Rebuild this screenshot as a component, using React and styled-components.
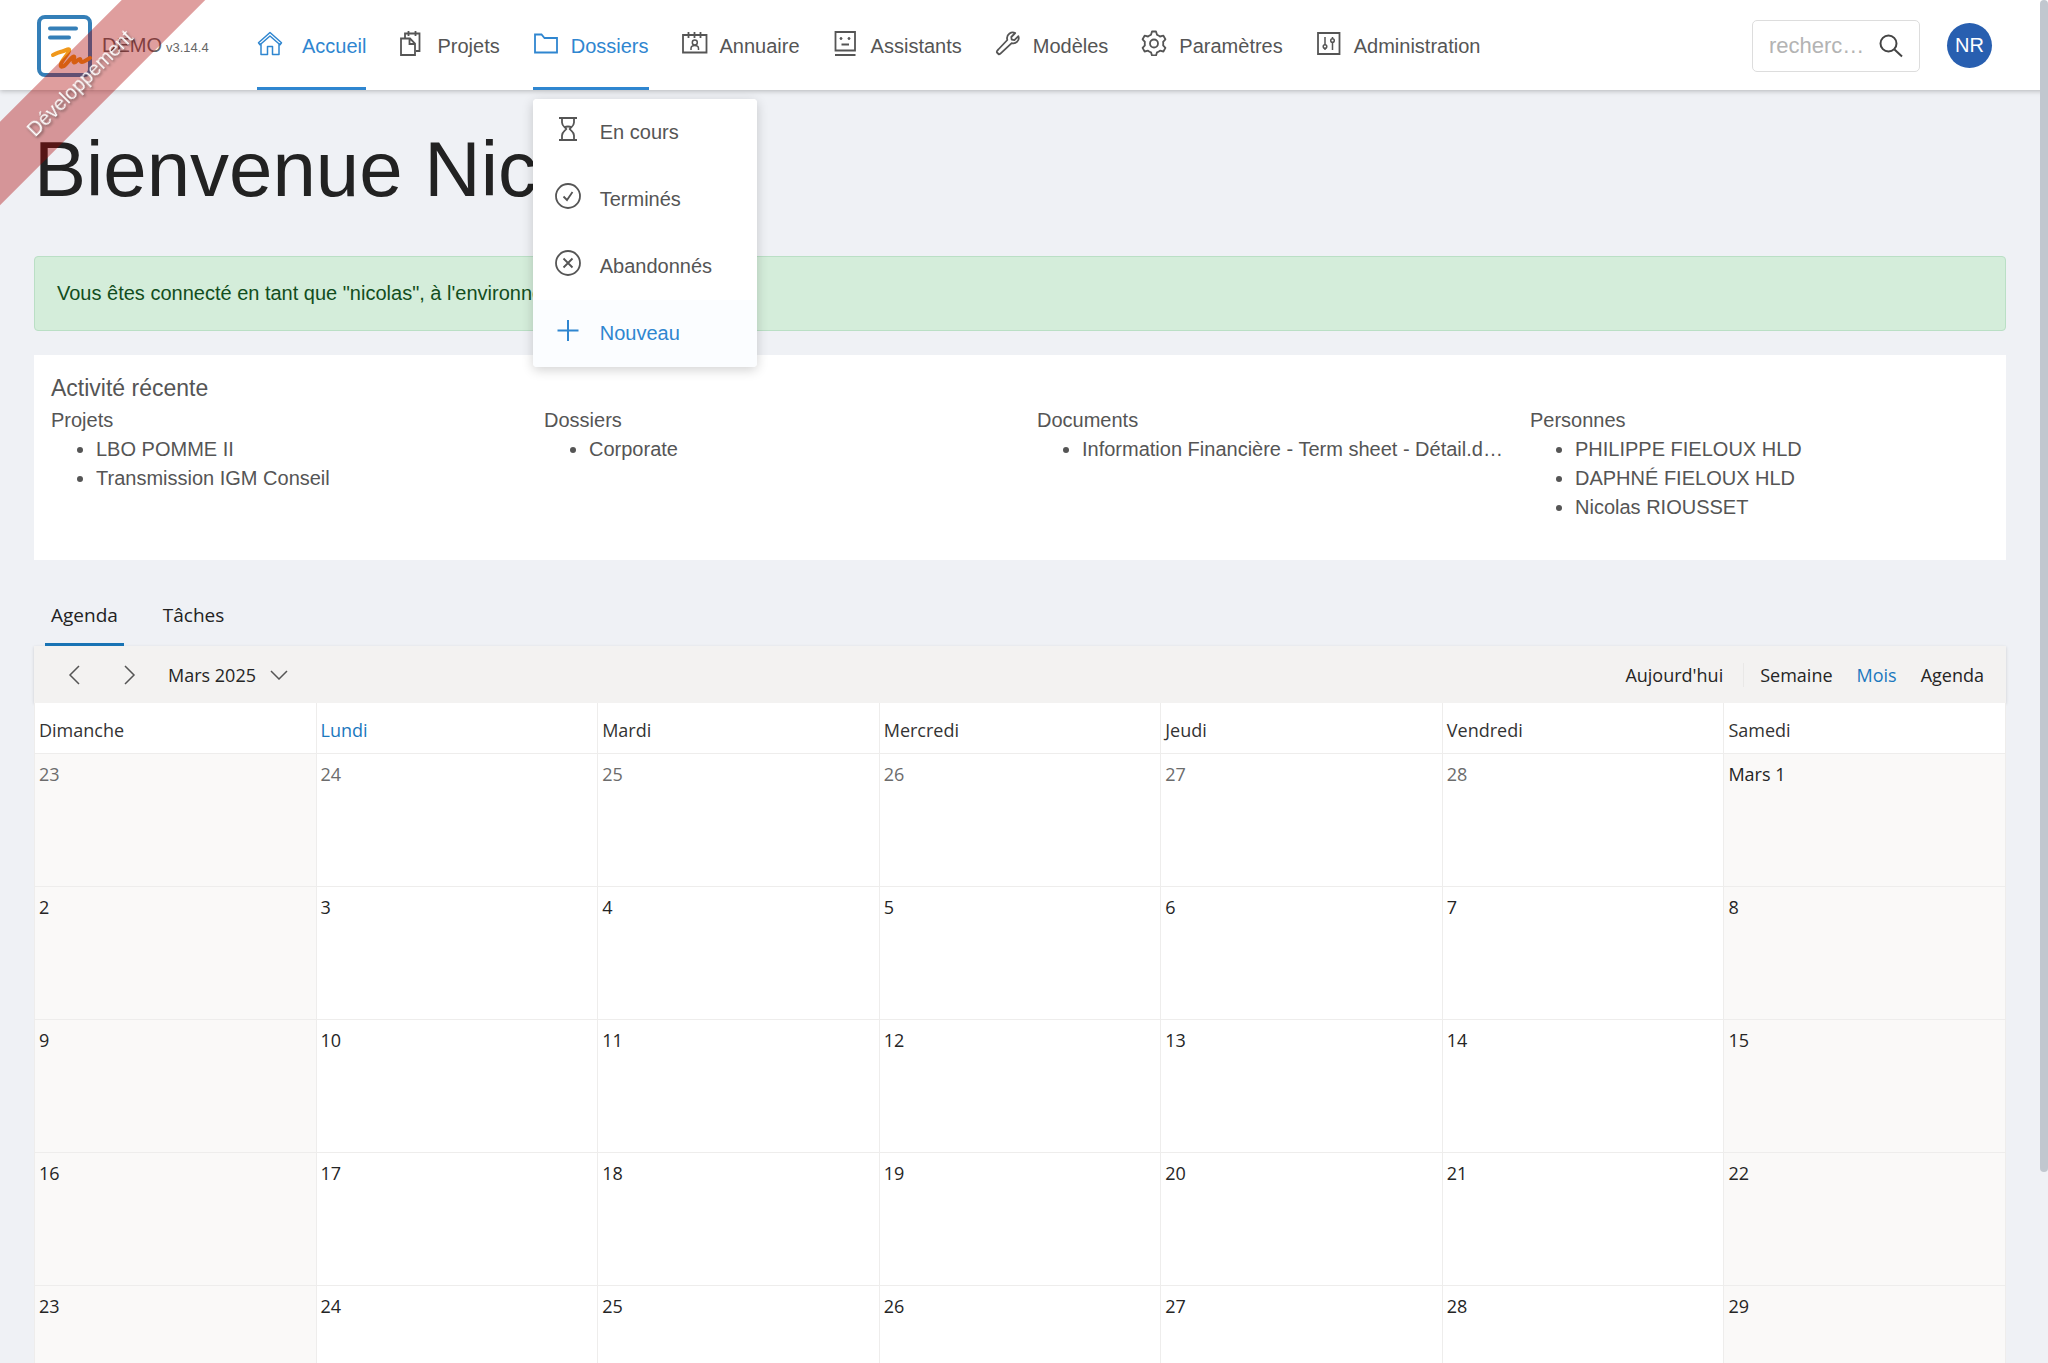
import React from 'react';
import styled, { createGlobalStyle } from 'styled-components';

const GlobalStyle = createGlobalStyle`
  * {
    box-sizing: border-box;
  }

  body {
    margin: 0;
    background-color: #eff1f5;
    color: #555;
    font-family: "Liberation Sans", Arial, sans-serif;
    font-size: 20px;
  }

  #root {
    height: 100vh;
    overflow: hidden;
  }
`;

const Page = styled.div`
  padding-right: 8px;
`;

const Ribbon = styled.div`
  position: fixed;
  top: 54px;
  left: -70px;
  width: 300px;
  height: 59px;
  line-height: 59px;
  text-align: center;
  color: white;
  background-color: rgba(170, 0, 0, 0.38);
  text-shadow: 0 2px 3px rgba(0, 0, 0, 0.5);
  transform: rotate(-45deg);
  pointer-events: none;
  z-index: 20;
`;

const ScrollThumb = styled.div`
  position: fixed;
  top: 0;
  right: 0;
  width: 8px;
  height: 86vh;
  border-radius: 4px;
  background-color: #c1c7cf;
  z-index: 30;
`;

const Header = styled.header`
  display: flex;
  align-items: center;
  height: 90px;
  margin-right: -8px;
  padding: 1px 56px 0 36px;
  background-color: white;
  box-shadow: 0 1px 5px rgba(0, 0, 0, 0.25);
`;

const Brand = styled.a`
  display: flex;
  align-items: center;
  width: 221px;
  color: #666;
  text-decoration: none;
`;

const BrandName = styled.span`
  margin-left: 9px;
`;

const Version = styled.span`
  margin-left: 4px;
  padding-top: 4px;
  font-size: 13px;
`;

const NavLinks = styled.nav`
  display: flex;
  align-self: stretch;
  gap: 33px;
  flex: 1;
`;

const NavItem = styled.div`
  position: relative;
  display: flex;
`;

const NavLink = styled.a`
  display: flex;
  align-items: center;
  gap: 12px;
  padding-top: 4px;
  border-bottom: 3px solid ${props => (props.$active ? '#2f86d0' : 'transparent')};
  color: ${props => (props.$active ? '#2f86d0' : '#555')};
  text-decoration: none;

  svg {
    margin-bottom: 6px;
  }
`;

const Menu = styled.div`
  position: absolute;
  top: 98px;
  left: 0;
  width: 224px;
  overflow: hidden;
  background-color: white;
  border-radius: 4px;
  box-shadow: 0 3px 12px rgba(0, 0, 0, 0.18);
  z-index: 10;
`;

const MenuItem = styled.a`
  display: flex;
  align-items: center;
  gap: 19px;
  height: 67px;
  padding-left: 22px;
  color: ${props => (props.$active ? '#2f86d0' : '#555')};
  background-color: ${props => (props.$active ? '#fbfdff' : 'white')};
  text-decoration: none;

  svg {
    margin-bottom: 7px;
  }
`;

const Search = styled.label`
  display: flex;
  align-items: center;
  width: 168px;
  height: 52px;
  margin-right: 27px;
  padding: 0 16px;
  border: 1px solid #ddd;
  border-radius: 5px;
  color: #444;
`;

const SearchInput = styled.input`
  flex: 1;
  min-width: 0;
  padding: 0;
  border: none;
  outline: none;
  background: none;
  font-family: inherit;
  font-size: 22px;

  &::placeholder {
    color: #b3b3b3;
  }
`;

const Avatar = styled.button`
  width: 45px;
  height: 45px;
  padding: 0;
  border: none;
  border-radius: 50%;
  background-color: #285fb0;
  color: white;
  font-family: inherit;
  font-size: 20px;
`;

const Main = styled.main`
  padding: 33px 34px 0;
`;

const Title = styled.h1`
  margin: 0 0 41px;
  color: #222;
  font-size: 78px;
  font-weight: 400;
  line-height: 92px;
`;

const Alert = styled.div`
  height: 75px;
  margin-bottom: 24px;
  padding: 0 22px;
  border: 1px solid #badfc5;
  border-radius: 4px;
  background-color: #d4edda;
  color: #124d20;
  line-height: 73px;
`;

const Card = styled.section`
  margin-bottom: 27px;
  padding: 19px 0 38px;
  background-color: white;
  line-height: 29px;
`;

const CardTitle = styled.h2`
  margin: 0 0 3px;
  padding: 0 17px;
  font-size: 23px;
  font-weight: 400;
`;

const CardColumns = styled.div`
  display: grid;
  grid-template-columns: repeat(4, 1fr);
`;

const CardColumn = styled.div`
  min-width: 0;
  padding: 0 8px 0 17px;
`;

const ColumnTitle = styled.h3`
  margin: 0;
  font-size: 20px;
  font-weight: 400;
`;

const List = styled.ul`
  margin: 0;
  padding-left: 45px;
`;

const ListLink = styled.a`
  display: block;
  overflow: hidden;
  color: inherit;
  text-decoration: none;
  text-overflow: ellipsis;
  white-space: nowrap;
`;

const Scheduler = styled.section`
  font-family: "Open Sans", "Noto Sans", sans-serif;
  font-size: 18px;
  color: #333;
`;

const Tabs = styled.div`
  display: flex;
  gap: 33px;
  padding-left: 11px;
`;

const Tab = styled.button`
  height: 59px;
  padding: 0 6px;
  border: none;
  border-bottom: 3px solid ${props => (props.$active ? '#1873b4' : 'transparent')};
  background: none;
  color: #222;
  font-family: inherit;
  font-size: 19px;
`;

const Toolbar = styled.div`
  display: flex;
  align-items: center;
  height: 57px;
  padding: 0 10px 0 22px;
  background-color: #f3f2f1;
  box-shadow: 0 1px 3px rgba(0, 0, 0, 0.15);
`;

const ToolbarButton = styled.button`
  display: flex;
  align-items: center;
  gap: 14px;
  padding: 0 12px;
  border: none;
  background: none;
  color: ${props => (props.$active ? '#1b78be' : '#252525')};
  font-family: inherit;
  font-size: 18px;

  svg {
    color: #555;
  }
`;

const ArrowButton = styled(ToolbarButton)`
  justify-content: center;
  width: 36px;
  padding: 0;
`;

const Arrows = styled.div`
  display: flex;
  gap: 20px;
  margin-right: 8px;
`;

const Spacer = styled.div`
  flex: 1;
`;

const Separator = styled.div`
  width: 1px;
  height: 24px;
  margin: 0 4px 0 8px;
  background-color: #e9e8e7;
`;

const Calendar = styled.table`
  width: 100%;
  table-layout: fixed;
  border-collapse: collapse;
  background-color: white;
`;

const DayName = styled.th`
  height: 50px;
  padding: 4px 4px 0;
  border: 1px solid #eeedec;
  border-top: none;
  color: ${props => (props.$current ? '#1b78be' : '#333')};
  font-weight: 400;
  text-align: left;
`;

const DayCell = styled.td`
  height: 133px;
  padding: 8px 4px;
  border: 1px solid #eeedec;
  background-color: ${props => (props.$weekend ? '#faf9f8' : 'white')};
  color: ${props => (props.$muted ? '#6c6c6c' : '#252525')};
  vertical-align: top;
`;

// Icons
const Icon = ({ width = 26, height = 26, strokeWidth = 1.8, children }) => (
  <svg
    width={width}
    height={height}
    viewBox={`0 0 ${width} ${height}`}
    fill="none"
    stroke="currentColor"
    strokeWidth={strokeWidth}
    aria-hidden="true"
  >
    {children}
  </svg>
);

const HomeIcon = () => (
  <Icon width={33}>
    <path d="M4 13v11.500h6.500v-8h5v8H22V13M13 2.500L1.500 12.800l1.500 2L13 6l10 8.800 1.500-2z" strokeLinejoin="round" strokeWidth="1.500" />
  </Icon>
);

const ProjectsIcon = () => (
  <Icon>
    <path d="M2 8.500h9l5 5V25H2zM10.500 8.500v5.500H16" />
    <path d="M6 8V3.500h14.500V21H17M9.500 1v5M16.500 1v5" />
  </Icon>
);

const FolderIcon = () => (
  <Icon>
    <path d="M2 4.500h6.500l3 3.500H24v14.500H2z" />
  </Icon>
);

const DirectoryIcon = () => (
  <Icon>
    <path d="M1 5h23.500v17.500H1zM6.500 2v6M12.500 2v6M18.500 2v6" />
    <circle cx="12.800" cy="12.500" r="2.500" strokeWidth="1.500" />
    <path d="M9 20v-1.500c0-2 1.500-3 3.800-3s3.700 1 3.700 3V20" strokeWidth="1.500" />
  </Icon>
);

const AssistantIcon = () => (
  <Icon>
    <path d="M2.500 2h19.500v18.500h-19.500zM2 25h20.500M8.500 14.500H16" />
    <circle cx="8" cy="8.500" r="1" fill="currentColor" strokeWidth="1" />
    <circle cx="16" cy="8.500" r="1" fill="currentColor" strokeWidth="1" />
  </Icon>
);

const WrenchIcon = () => (
  <Icon>
    <path
      d="M14.500 3.500c2-1.400 4-1.400 5.700-.5l-3.900 4 .4 2.700 2.700.4 4-3.900c.7 2 .3 4-1.200 5.500-1.600 1.600-3.600 2-5.500 1.400L6.500 22.700c-1 1-2 2.200-3 1.300L2 22.500c-.8-.9.300-2 1.300-3l9-9.500c-.7-2.500.2-5 2.200-6.500z"
      strokeLinejoin="round"
    />
  </Icon>
);

const GearIcon = () => (
  <Icon>
    <path
      d="M11 1.500h4l1 3.300c1.200.4 2 .9 3 1.700l3.400-.8 2 3.600-2.300 2.600c.2 1.200.2 2.200 0 3.400l2.300 2.600-2 3.600-3.400-.8c-1 .8-1.800 1.300-3 1.700l-1 3.100h-4l-1-3.100c-1.200-.4-2-.9-3-1.700l-3.400.8-2-3.600 2.300-2.600c-.2-1.200-.2-2.200 0-3.400L1.600 9.300l2-3.600 3.400.8c1-.8 1.800-1.300 3-1.700z"
      strokeLinejoin="round"
    />
    <circle cx="13" cy="13.500" r="4" />
  </Icon>
);

const SlidersIcon = () => (
  <Icon>
    <path d="M2 3h21.500v21H2z" />
    <path d="M9 7v8M9 18.500V20M16.500 7v1.500M16.500 12v8" strokeWidth="1.500" />
    <circle cx="9" cy="16.500" r="1.800" strokeWidth="1.500" />
    <circle cx="16.500" cy="10.500" r="1.800" strokeWidth="1.500" />
  </Icon>
);

const HourglassIcon = () => (
  <Icon>
    <path d="M4 2h18M4 24h18M7 2v4.500c0 3.500 2.800 4.500 4.300 6.500C9.800 15 7 16 7 19.500V24M19 2v4.500c0 3.500-2.800 4.500-4.300 6.500 1.500 2 4.300 3 4.300 6.500V24M9 11.500q4-2 8 0" />
  </Icon>
);

const CheckCircleIcon = () => (
  <Icon>
    <circle cx="13" cy="13" r="12" />
    <path d="M8.500 13.500l3.500 3.500 5.500-8" />
  </Icon>
);

const CrossCircleIcon = () => (
  <Icon>
    <circle cx="13" cy="13" r="12" />
    <path d="M8.500 8.500l9 9M17.500 8.500l-9 9" />
  </Icon>
);

const PlusIcon = () => (
  <Icon strokeWidth={2}>
    <path d="M13 3v21M2.500 13.500h21" />
  </Icon>
);

const SearchIcon = () => (
  <Icon width={24} height={24} strokeWidth={2}>
    <circle cx="9.500" cy="9.500" r="8" />
    <path d="M15.500 15.500l7.500 7" />
  </Icon>
);

const ChevronLeft = () => (
  <Icon width={12} height={20} strokeWidth={1.5}>
    <path d="M11 1L2 10l9 9" />
  </Icon>
);

const ChevronRight = () => (
  <Icon width={12} height={20} strokeWidth={1.5}>
    <path d="M1 1l9 9-9 9" />
  </Icon>
);

const ChevronDown = () => (
  <Icon width={18} height={10} strokeWidth={1.5}>
    <path d="M1 1l8 8 8-8" />
  </Icon>
);

const Logo = () => (
  <svg width="57" height="64" viewBox="0 0 57 64" fill="none" aria-hidden="true">
    <rect x="3" y="3" width="51" height="58" rx="6" stroke="#347fb8" strokeWidth="4" />
    <path d="M14 14.500h26M14 23.500h19" stroke="#347fb8" strokeWidth="4" strokeLinecap="round" />
    <path
      d="M17 41c3-1.500 6-3 9-3.500 3-.5 6-3 7-2 1.500 2-5 8-7.500 13-1.500 3.500-1 5 1.500 4 4-1.500 7-9 11-10 1.500 1.500-2 5 0 6 2 .5 3.500-3.500 6-3.500 1 1 0 3 2 3s4-2 8-4"
      stroke="#f0981c"
      strokeWidth="4"
      strokeLinecap="round"
      strokeLinejoin="round"
    />
  </svg>
);

const navItems = [
  { name: 'Accueil', icon: HomeIcon, active: true },
  { name: 'Projets', icon: ProjectsIcon },
  { name: 'Dossiers', icon: FolderIcon, active: true, menu: true },
  { name: 'Annuaire', icon: DirectoryIcon },
  { name: 'Assistants', icon: AssistantIcon },
  { name: 'Modèles', icon: WrenchIcon },
  { name: 'Paramètres', icon: GearIcon },
  { name: 'Administration', icon: SlidersIcon },
];

const menuItems = [
  { name: 'En cours', icon: HourglassIcon },
  { name: 'Terminés', icon: CheckCircleIcon },
  { name: 'Abandonnés', icon: CrossCircleIcon },
  { name: 'Nouveau', icon: PlusIcon, active: true },
];

const activity = [
  { title: 'Projets', items: ['LBO POMME II', 'Transmission IGM Conseil'] },
  { title: 'Dossiers', items: ['Corporate'] },
  { title: 'Documents', items: ['Information Financière - Term sheet - Détail.docx'] },
  { title: 'Personnes', items: ['PHILIPPE FIELOUX HLD', 'DAPHNÉ FIELOUX HLD', 'Nicolas RIOUSSET'] },
];

const dayNames = ['Dimanche', 'Lundi', 'Mardi', 'Mercredi', 'Jeudi', 'Vendredi', 'Samedi'];

const weeks = [
  ['23', '24', '25', '26', '27', '28', 'Mars 1'],
  ['2', '3', '4', '5', '6', '7', '8'],
  ['9', '10', '11', '12', '13', '14', '15'],
  ['16', '17', '18', '19', '20', '21', '22'],
  ['23', '24', '25', '26', '27', '28', '29'],
];

const Navbar = () => (
  <Header>
    <Brand href="#">
      <Logo />
      <BrandName>DEMO</BrandName>
      <Version>v3.14.4</Version>
    </Brand>

    <NavLinks>
      {navItems.map(({ name, icon: ItemIcon, active, menu }) => (
        <NavItem key={name}>
          <NavLink href="#" $active={active}>
            <ItemIcon />
            {name}
          </NavLink>
          {menu && (
            <Menu>
              {menuItems.map(({ name, icon: MenuIcon, active }) => (
                <MenuItem key={name} href="#" $active={active}>
                  <MenuIcon />
                  {name}
                </MenuItem>
              ))}
            </Menu>
          )}
        </NavItem>
      ))}
    </NavLinks>

    <Search>
      <SearchInput type="text" placeholder="recherc…" aria-label="Rechercher" />
      <SearchIcon />
    </Search>
    <Avatar>NR</Avatar>
  </Header>
);

const RecentActivity = () => (
  <Card>
    <CardTitle>Activité récente</CardTitle>
    <CardColumns>
      {activity.map(({ title, items }) => (
        <CardColumn key={title}>
          <ColumnTitle>{title}</ColumnTitle>
          <List>
            {items.map(item => (
              <li key={item}>
                <ListLink href="#">{item}</ListLink>
              </li>
            ))}
          </List>
        </CardColumn>
      ))}
    </CardColumns>
  </Card>
);

const Agenda = () => (
  <Scheduler>
    <Tabs role="tablist">
      <Tab role="tab" aria-selected="true" $active>Agenda</Tab>
      <Tab role="tab" aria-selected="false">Tâches</Tab>
    </Tabs>
    <Toolbar>
      <Arrows>
        <ArrowButton aria-label="Précédent"><ChevronLeft /></ArrowButton>
        <ArrowButton aria-label="Suivant"><ChevronRight /></ArrowButton>
      </Arrows>
      <ToolbarButton>
        Mars 2025
        <ChevronDown />
      </ToolbarButton>
      <Spacer />
      <ToolbarButton>Aujourd'hui</ToolbarButton>
      <Separator />
      <ToolbarButton>Semaine</ToolbarButton>
      <ToolbarButton $active>Mois</ToolbarButton>
      <ToolbarButton>Agenda</ToolbarButton>
    </Toolbar>
    <Calendar>
      <thead>
        <tr>
          {dayNames.map(day => (
            <DayName key={day} $current={day === 'Lundi'}>{day}</DayName>
          ))}
        </tr>
      </thead>
      <tbody>
        {weeks.map((week, row) => (
          <tr key={row}>
            {week.map((day, col) => (
              <DayCell key={col} $weekend={col === 0 || col === 6} $muted={row === 0 && col < 6}>
                {day}
              </DayCell>
            ))}
          </tr>
        ))}
      </tbody>
    </Calendar>
  </Scheduler>
);

const App = () => (
  <>
    <GlobalStyle />
    <Page>
      <Ribbon>Développement</Ribbon>
      <Navbar />
      <Main>
        <Title>Bienvenue Nicolas</Title>
        <Alert>Vous êtes connecté en tant que "nicolas", à l'environnement</Alert>
        <RecentActivity />
        <Agenda />
      </Main>
    </Page>
    <ScrollThumb />
  </>
);

export default App;
